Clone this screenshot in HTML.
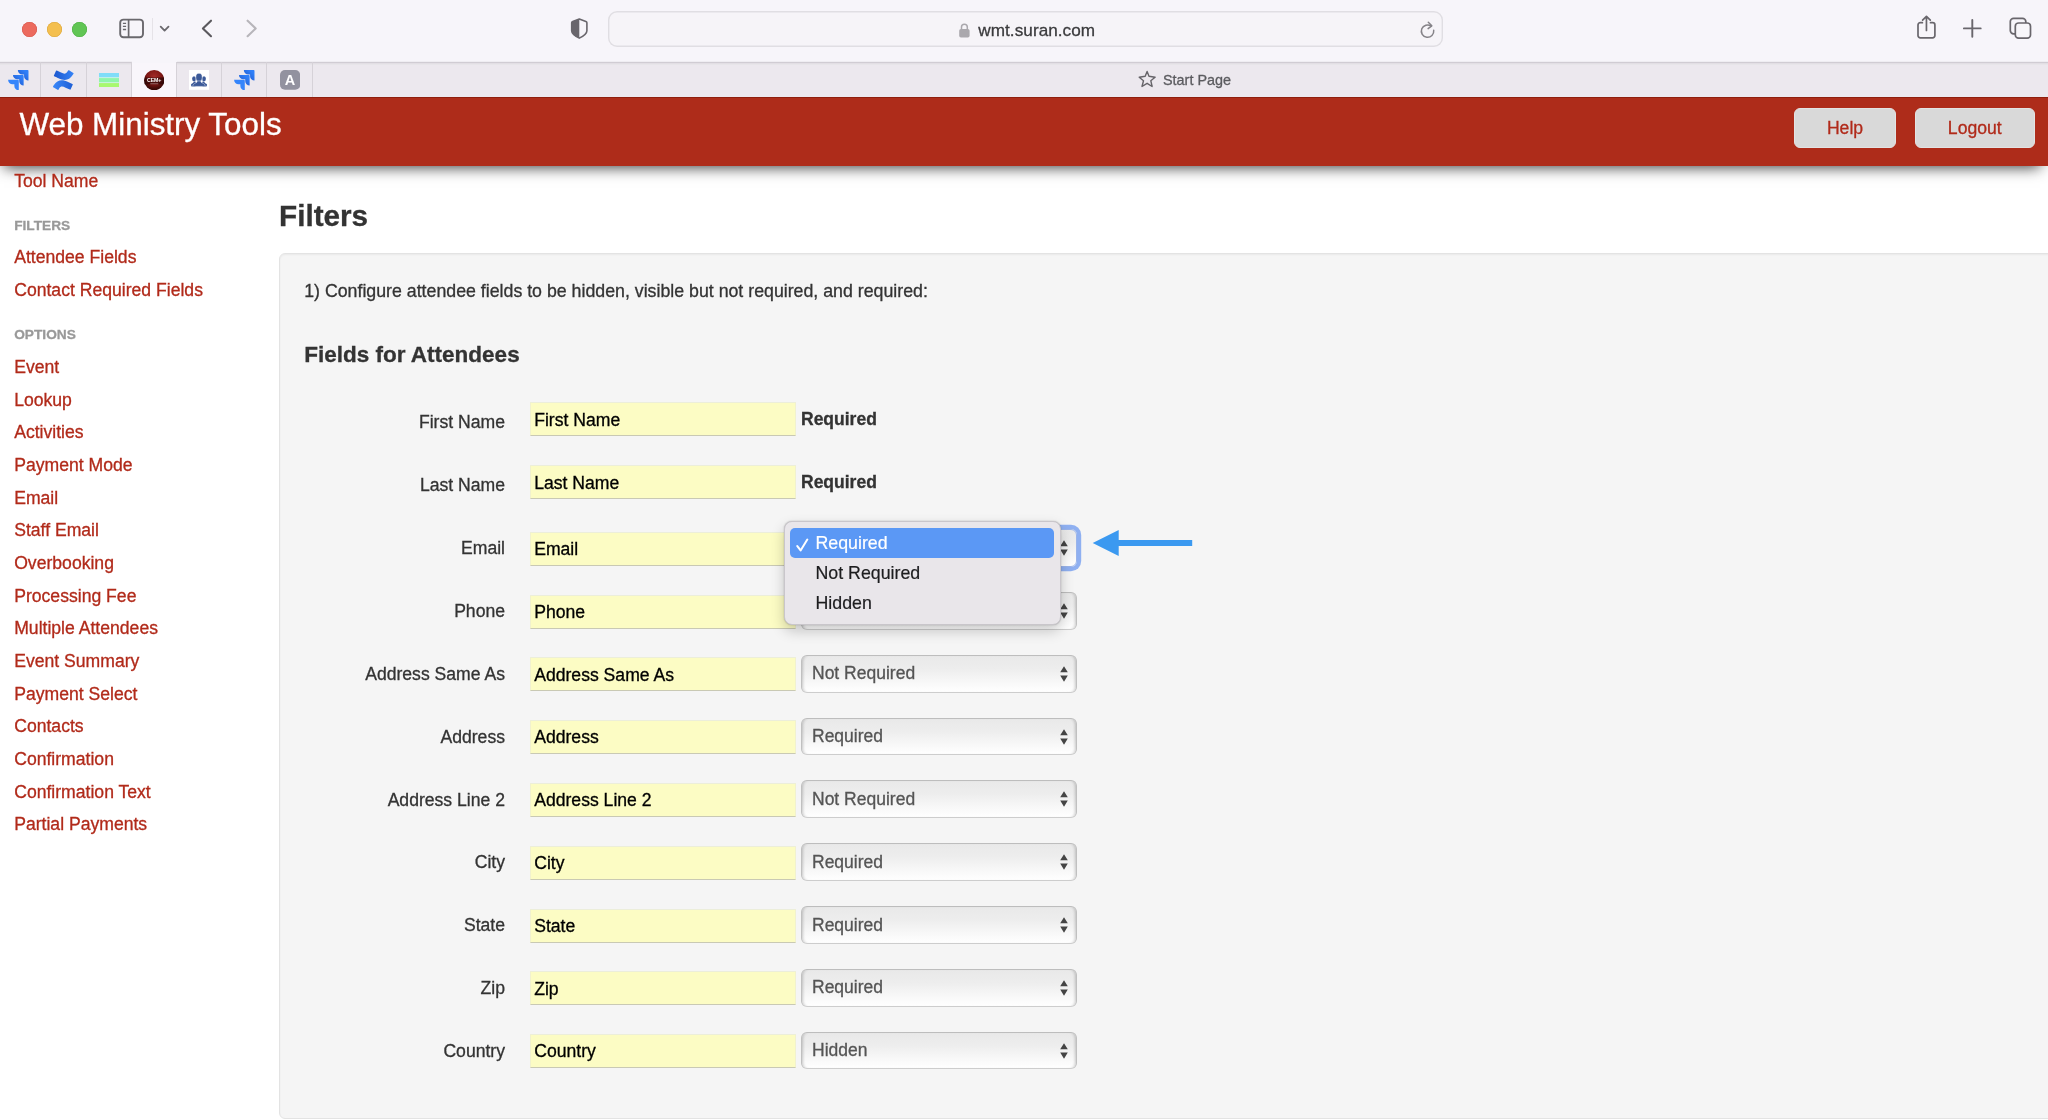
<!DOCTYPE html>
<html lang="en">
<head>
<meta charset="utf-8">
<title>Web Ministry Tools - Filters</title>
<style>
*{box-sizing:border-box;}
html,body{margin:0;padding:0;}
body{width:2048px;height:1120px;overflow:hidden;position:relative;background:#fff;
  font-family:"Liberation Sans",sans-serif;font-size:17.6px;color:#333;-webkit-text-stroke:.3px currentColor;}
#root{position:absolute;left:0;top:0;width:2048px;height:1120px;overflow:hidden;will-change:transform;}
a{text-decoration:none;color:#b12a1a;}
svg{display:block;}

/* ---------- Safari chrome ---------- */
#toolbar{z-index:5;position:absolute;left:0;top:0;width:2048px;height:61px;background:#f7f5fa;}
#toolbar .dot{position:absolute;top:21.6px;width:15.1px;height:15.1px;border-radius:50%;}
#toolbar .ico{position:absolute;}
#urlbar{position:absolute;left:608px;top:11.2px;width:835px;height:35.6px;border:none;box-shadow:inset 0 0 0 1.4px #e0dee3;border-radius:9px;background:#f6f4f8;}
#urlbar .url{position:absolute;left:370.3px;top:8px;font-size:17.15px;line-height:22px;color:#3b3b3d;letter-spacing:0.05px;}
#tabbar{z-index:4;position:absolute;left:0;top:61px;width:2048px;height:36px;background:linear-gradient(#efedf2 0,#efedf2 1px,#d0ccd3 1px,#d0ccd3 2px,#e2dee4 2px,#e2dee4 3px,#e7e5e9 3px,#e7e5e9 4px,#ece8ee 4px,#ece8ee 100%);}
#tabbar .tab{position:absolute;top:1px;height:35px;border-right:1px solid #d6d2d8;}
#tabbar .tab.active{background:linear-gradient(#f7f5fa 0,#f7f5fa 2px,#f9f6fb 2px,#f9f6fb 100%);top:0;height:36px;border-right:none;}
#tabbar .tico{position:absolute;}
#tabbar .title{position:absolute;left:1163px;top:9px;font-size:14.4px;line-height:20px;color:#5b5b5f;}

/* ---------- page ---------- */
#navbar{position:absolute;left:0;top:97px;width:2048px;height:69px;background:#ae2c1a;border-top:1px solid #8f1f0e;box-shadow:-2px 7px 14px -6px rgba(0,0,0,.8);}
#navbar .brand{position:absolute;left:19.4px;top:4.5px;font-size:31.4px;line-height:44px;color:#fff;white-space:nowrap;}
#navbar .btn{position:absolute;top:10.3px;height:40px;border:1px solid #e3e3e3;border-radius:6px;background:#d9d9d9;color:#b12a1a;font-size:17.6px;line-height:39px;text-align:center;}

#sidebar{position:absolute;left:0;top:166px;width:270px;}
#sidebar ul{list-style:none;margin:0;padding:0;}
#sidebar li{position:absolute;left:14.2px;white-space:nowrap;line-height:24px;}
#sidebar li.hdr{font-size:13.7px;font-weight:bold;color:#999;text-transform:uppercase;}

#content{position:absolute;left:279px;top:166px;width:1769px;}
#content h1{position:absolute;left:0;top:30px;margin:0;font-size:29.7px;line-height:40px;font-weight:bold;color:#333;}
.well{position:absolute;left:0;top:87px;width:1800px;height:865.5px;background:#f5f5f5;border:1.3px solid #e3e3e3;border-radius:6px;box-shadow:inset 0 1px 2px rgba(0,0,0,.05);}
.well p{position:absolute;left:24.2px;top:25px;font-size:17.75px;margin:0;line-height:24px;white-space:nowrap;}
.well h4{position:absolute;left:24.2px;top:86px;margin:0;font-size:22.5px;line-height:30px;font-weight:bold;}
.row{position:absolute;left:0;width:900px;height:40px;}
.row label{position:absolute;left:0;width:225px;top:0;text-align:right;line-height:24px;white-space:nowrap;}
.row .inp{position:absolute;left:250px;width:266px;height:34px;background:#fcfcc4;border-top:1.3px solid #eceeda;border-bottom:1.5px solid #c9c9b4;border-left:1px solid #f1f1cf;border-right:1px solid #f1f1cf;color:#000;line-height:24px;padding:4.4px 0 0 3.2px;white-space:nowrap;}
.row .req{position:absolute;left:521px;font-weight:bold;font-size:17.5px;line-height:24px;}
.row .sel{position:absolute;left:521px;width:276px;height:37.8px;border:1.3px solid #c0c0c0;border-top-color:#bdbdbd;border-bottom-color:#cdcdcd;border-radius:6px;
  background:linear-gradient(#e9e9e9 0%,#ededed 35%,#f7f7f7 70%,#fff 100%);
  box-shadow:inset 3px 0 3px -2px rgba(0,0,0,.2),inset -3px 0 3px -2px rgba(0,0,0,.2);
  color:#555;font-size:17.5px;line-height:24px;padding:5.7px 0 0 10px;white-space:nowrap;}
.row .sel svg{position:absolute;right:7.8px;top:10px;}
.row .sel.focus{box-shadow:0 0 0 4.2px #8fb0f1;border-color:#9ab4ea;}

#popup{position:absolute;left:784.3px;top:521px;width:277px;height:103.500px;border-radius:8px;background:#e9e6ea;border:1px solid #c9c6cb;box-shadow:0 6px 14px rgba(0,0,0,.2),0 0 1.5px rgba(0,0,0,.25);}
#popup .it{position:absolute;left:5px;width:264px;height:30px;border-radius:5px;font-size:17.8px;line-height:31px;padding-left:25.2px;-webkit-text-stroke:.2px currentColor;color:#1d1d1f;white-space:nowrap;}
#popup .it.sel{background:#5b98f5;color:#fff;}
#popup .it svg{position:absolute;left:6px;top:9.5px;}
#arrow{position:absolute;left:1092px;top:528px;}
</style>
</head>
<body>
<div id="root">

<div id="toolbar">
  <span class="dot" style="left:21.6px;background:#ec6a5e;box-shadow:inset 0 0 0 .6px #d8574c"></span>
  <span class="dot" style="left:46.6px;background:#f4bf4f;box-shadow:inset 0 0 0 .6px #dba63b"></span>
  <span class="dot" style="left:71.7px;background:#61c554;box-shadow:inset 0 0 0 .6px #4fb043"></span>
  <!-- sidebar icon -->
  <svg class="ico" style="left:118px;top:17px" width="28" height="23" viewBox="0 0 28 23">
    <rect x="2.2" y="2.6" width="22.8" height="17.6" rx="3.2" fill="none" stroke="#6a686d" stroke-width="1.9"/>
    <line x1="10.6" y1="2.6" x2="10.6" y2="20.2" stroke="#6a686d" stroke-width="1.7"/>
    <path d="M4.9 6.3h3.2M4.9 9.4h3.2M4.9 12.5h3.2" stroke="#6a686d" stroke-width="1.3"/>
  </svg>
  <span class="ico" style="left:152px;top:18px;width:1.2px;height:22px;background:#e6e3e8"></span>
  <svg class="ico" style="left:158px;top:23px" width="13" height="11" viewBox="0 0 13 11">
    <path d="M2.7 3.6l3.9 4 3.9-4" fill="none" stroke="#6a686d" stroke-width="1.8" stroke-linecap="round" stroke-linejoin="round"/>
  </svg>
  <svg class="ico" style="left:198px;top:17px" width="18" height="23" viewBox="0 0 18 23">
    <path d="M13 3.7L4.9 11.4 13 19.2" fill="none" stroke="#5b595e" stroke-width="2.1" stroke-linecap="round" stroke-linejoin="round"/>
  </svg>
  <svg class="ico" style="left:242px;top:17px" width="18" height="23" viewBox="0 0 18 23">
    <path d="M5.6 3.7l8.1 7.7-8.1 7.8" fill="none" stroke="#b7b5ba" stroke-width="2.1" stroke-linecap="round" stroke-linejoin="round"/>
  </svg>
  <!-- shield -->
  <svg class="ico" style="left:568px;top:16px" width="23" height="26" viewBox="0 0 23 26">
    <path d="M11.300 3L17.900 5.400Q18.900 5.750 18.900 6.800V14.700C18.900 17.800 16 19.800 11.300 22.100 6.600 19.800 3.700 17.800 3.700 14.700V6.800Q3.700 5.750 4.700 5.400Z" fill="none" stroke="#69666c" stroke-width="1.600" stroke-linejoin="round"/>
    <path d="M11.300 3L4.700 5.400Q3.700 5.750 3.700 6.800V14.700C3.700 17.800 6.600 19.800 11.300 22.100Z" fill="#69666c"/>
  </svg>
  <div id="urlbar">
    <svg class="ico" style="left:350px;top:11.2px" width="13" height="17" viewBox="0 0 13 17">
      <rect x="1.2" y="6.900" width="10.400" height="8.600" rx="1.800" fill="#aaa8ad"/>
      <path d="M3.5 7.400V5.100a2.900 2.900 0 0 1 5.800 0v2.300" fill="none" stroke="#aaa8ad" stroke-width="1.500"/>
    </svg>
    <span class="url">wmt.suran.com</span>
    <svg class="ico" style="left:809.6px;top:9.4px" width="20" height="20" viewBox="0 0 20 20">
      <path d="M15.700 9.300a6.200 6.200 0 1 1-2.500-4.200" fill="none" stroke="#858388" stroke-width="1.500" stroke-linecap="round"/>
      <path d="M10.300 1.300l3.500 3.500-3.700 2.800" fill="none" stroke="#858388" stroke-width="1.500" stroke-linecap="round" stroke-linejoin="round"/>
    </svg>
  </div>
  <!-- share -->
  <svg class="ico" style="left:1912px;top:12px" width="30" height="30" viewBox="0 0 30 30">
    <path d="M10.400 10.700H8.300a2.300 2.300 0 0 0-2.300 2.300v10.500a2.300 2.300 0 0 0 2.300 2.300h12.300a2.300 2.300 0 0 0 2.300-2.300V13a2.300 2.300 0 0 0-2.300-2.300h-2.100" fill="none" stroke="#69666c" stroke-width="1.700" stroke-linecap="round"/>
    <path d="M14.450 18.500V4.700M10.600 8.200l3.850-3.800 3.850 3.800" fill="none" stroke="#69666c" stroke-width="1.700" stroke-linecap="round" stroke-linejoin="round"/>
  </svg>
  <svg class="ico" style="left:1960px;top:16px" width="24" height="24" viewBox="0 0 24 24">
    <path d="M12.300 4v16.800M3.900 12.400h16.800" fill="none" stroke="#69666c" stroke-width="1.900" stroke-linecap="round"/>
  </svg>
  <svg class="ico" style="left:2006px;top:14px" width="28" height="28" viewBox="0 0 28 28">
    <rect x="4.300" y="4.300" width="15.500" height="15.500" rx="3.300" fill="none" stroke="#69666c" stroke-width="1.700"/>
    <rect x="9.300" y="9.000" width="15.200" height="15.200" rx="3.300" fill="#f8f6fa" stroke="#69666c" stroke-width="1.700"/>
  </svg>
</div>

<div id="tabbar">
  <div class="tab" style="left:0;width:41.200px"></div>
  <div class="tab" style="left:41.200px;width:45.400px"></div>
  <div class="tab" style="left:86.600px;width:45.400px"></div>
  <div class="tab active" style="left:132px;width:44.800px"></div>
  <div class="tab" style="left:176px;width:46px;border-left:1px solid #d6d2d8"></div>
  <div class="tab" style="left:222px;width:45.300px"></div>
  <div class="tab" style="left:267.300px;width:45.300px"></div>
  <svg class="tico" style="left:8.1px;top:8.800px" width="20.600" height="20.400" viewBox="0 0 24 24">
    <defs><linearGradient id="jg1" x1=".9" y1=".1" x2=".35" y2=".65"><stop offset=".2" stop-color="#2f7ff8"/><stop offset="1" stop-color="#2566dc"/></linearGradient></defs>
    <path d="M23.013 0H11.455a5.215 5.215 0 0 0 5.215 5.215h2.129v2.057A5.215 5.215 0 0 0 24 12.483V1.005A1.001 1.001 0 0 0 23.013 0Z" fill="url(#jg1)"/>
    <path d="M17.294 5.757H5.736a5.215 5.215 0 0 0 5.215 5.214h2.129v2.058a5.218 5.218 0 0 0 5.215 5.214V6.758a1.001 1.001 0 0 0-1.001-1.001z" fill="url(#jg1)"/>
    <path d="M11.571 11.513H0a5.218 5.218 0 0 0 5.232 5.215h2.130v2.057A5.215 5.215 0 0 0 12.575 24V12.518a1.005 1.005 0 0 0-1.005-1.005z" fill="#3585fb"/>
  </svg>
  <svg class="tico" style="left:53.400px;top:8.700px" width="20.600" height="20.200" viewBox="0 0 24 24" preserveAspectRatio="none">
    <defs><linearGradient id="cg1" x1="0" y1="0" x2="1" y2="0"><stop offset="0" stop-color="#1c58cf"/><stop offset="1" stop-color="#3583f6"/></linearGradient>
    <linearGradient id="cg2" x1="0" y1="0" x2="1" y2="0"><stop offset="0" stop-color="#3a88f9"/><stop offset="1" stop-color="#1f5fd5"/></linearGradient></defs>
    <path d="M23.131 5.743c.249-.405.531-.875.764-1.250a.764.764 0 0 0-.256-1.034L18.675.404a.764.764 0 0 0-1.058.260c-.195.335-.451.763-.734 1.225-1.966 3.246-3.945 2.850-7.508 1.146L4.437.694a.764.764 0 0 0-1.027.382L1.046 6.422a.764.764 0 0 0 .382 1c1.039.490 3.105 1.467 4.965 2.361 6.698 3.246 12.392 3.029 16.738-4.040z" fill="url(#cg1)"/>
    <path d="M.87 18.257c-.248.382-.53.875-.763 1.245a.764.764 0 0 0 .255 1.040l4.965 3.054a.764.764 0 0 0 1.058-.260c.199-.332.454-.763.733-1.221 1.967-3.247 3.945-2.853 7.508-1.146l4.957 2.337a.764.764 0 0 0 1.028-.382l2.364-5.346a.764.764 0 0 0-.382-1 599.851 599.851 0 0 1-4.965-2.361C10.911 10.970 5.224 11.185.870 18.257z" fill="url(#cg2)"/>
  </svg>
  <svg class="tico" style="left:98.700px;top:11.800px" width="20.200" height="14.400" viewBox="0 0 20.200 14.400">
    <rect x="0" y="0" width="20.200" height="14.400" fill="#d3f3e6"/>
    <rect x="0" y="0" width="20.200" height="4.200" fill="#80ddf9"/>
    <rect x="0" y="5.100" width="20.200" height="4.100" fill="#8ff5ab"/>
    <rect x="0" y="10.100" width="20.200" height="4.300" fill="#a8f86e"/>
  </svg>
  <svg class="tico" style="left:143.900px;top:8.7px" width="20.400" height="20.400" viewBox="0 0 20.400 20.400">
    <defs><radialGradient id="rg" cx=".5" cy=".32" r=".62"><stop offset="0" stop-color="#a32a28"/><stop offset=".6" stop-color="#7d1715"/><stop offset="1" stop-color="#3a0907"/></radialGradient></defs>
    <circle cx="10.200" cy="10.200" r="10.100" fill="url(#rg)"/>
    <path d="M.6 7.600h19.200a10.100 10.100 0 0 1 0 6.600H.6a10.100 10.100 0 0 1 0-6.600z" fill="#1c0303" opacity=".55"/>
    <text x="10.200" y="12.100" font-family="Liberation Sans, sans-serif" font-size="5.300" font-weight="bold" fill="#fff" text-anchor="middle" letter-spacing="-.15">CEM+</text>
    <rect x="6.300" y="13.400" width="8" height=".8" fill="#d9b0ae" opacity=".7"/>
  </svg>
  <svg class="tico" style="left:189.100px;top:9.0px" width="20" height="19.800" viewBox="0 0 20 19.800">
    <rect width="20" height="19.800" fill="#fff"/>
    <g fill="#3b5998">
      <ellipse cx="5" cy="8.700" rx="1.900" ry="2.500"/>
      <path d="M1.900 14.800c.3-.8 1.100-1.400 2.100-1.900.5-.2.700-.7.700-1.300h1.700l1.200 3.500-1.400 1.400H2.500z"/>
      <ellipse cx="15" cy="8.700" rx="1.900" ry="2.500"/>
      <path d="M18.100 14.800c-.3-.8-1.100-1.400-2.100-1.900-.5-.2-.7-.7-.7-1.300h-1.700l-1.200 3.500 1.400 1.400h3.700z"/>
      <ellipse cx="10" cy="7.400" rx="3.200" ry="4.100" stroke="#fff" stroke-width=".5"/>
      <path d="M3.700 16.400c.2-1.800 1.200-2.700 2.800-3.300 1.200-.5 1.600-1 1.700-2.100h3.600c.1 1.100.5 1.600 1.700 2.100 1.600.6 2.600 1.500 2.800 3.300z" stroke="#fff" stroke-width=".4"/>
    </g>
  </svg>
  <svg class="tico" style="left:234.2px;top:8.800px" width="20.600" height="20.400" viewBox="0 0 24 24">
    <defs><linearGradient id="jg2" x1=".9" y1=".1" x2=".35" y2=".65"><stop offset=".2" stop-color="#2f7ff8"/><stop offset="1" stop-color="#2566dc"/></linearGradient></defs>
    <path d="M23.013 0H11.455a5.215 5.215 0 0 0 5.215 5.215h2.129v2.057A5.215 5.215 0 0 0 24 12.483V1.005A1.001 1.001 0 0 0 23.013 0Z" fill="url(#jg2)"/>
    <path d="M17.294 5.757H5.736a5.215 5.215 0 0 0 5.215 5.214h2.129v2.058a5.218 5.218 0 0 0 5.215 5.214V6.758a1.001 1.001 0 0 0-1.001-1.001z" fill="url(#jg2)"/>
    <path d="M11.571 11.513H0a5.218 5.218 0 0 0 5.232 5.215h2.130v2.057A5.215 5.215 0 0 0 12.575 24V12.518a1.005 1.005 0 0 0-1.005-1.005z" fill="#3585fb"/>
  </svg>
  <svg class="tico" style="left:279.500px;top:9.0px" width="20.200" height="19.800" viewBox="0 0 20.200 19.800">
    <rect width="20.200" height="19.800" rx="5" fill="#92929f"/>
    <text x="10.100" y="15.200" font-family="Liberation Sans, sans-serif" font-size="14.500" font-weight="bold" fill="#fff" text-anchor="middle">A</text>
  </svg>
  <svg class="tico" style="left:1136px;top:7px" width="23" height="22" viewBox="0 0 23 22">
    <path d="M11.100 3.500L13 8.300 19.100 9.300 14.800 12.700 16.100 18.500 11.100 15.300 6 18.500 7.500 12.700 3.200 9.300 9.200 8.300Z" fill="none" stroke="#666469" stroke-width="1.400" stroke-linejoin="round"/>
  </svg>
  <span class="title">Start Page</span>
</div>

<div id="navbar">
  <a class="brand">Web Ministry Tools</a>
  <a class="btn" style="left:1794px;width:102px">Help</a>
  <a class="btn" style="left:1914.500px;width:120.500px">Logout</a>
</div>

<div id="sidebar"><ul>
  <li style="top:2.9px"><a>Tool Name</a></li>
  <li class="hdr" style="top:47.5px">Filters</li>
  <li style="top:79.2px"><a>Attendee Fields</a></li>
  <li style="top:111.9px"><a>Contact Required Fields</a></li>
  <li class="hdr" style="top:156.5px">Options</li>
  <li style="top:188.9px"><a>Event</a></li>
  <li style="top:221.6px"><a>Lookup</a></li>
  <li style="top:254.3px"><a>Activities</a></li>
  <li style="top:286.9px"><a>Payment Mode</a></li>
  <li style="top:319.6px"><a>Email</a></li>
  <li style="top:352.3px"><a>Staff Email</a></li>
  <li style="top:385.0px"><a>Overbooking</a></li>
  <li style="top:417.7px"><a>Processing Fee</a></li>
  <li style="top:450.3px"><a>Multiple Attendees</a></li>
  <li style="top:483.0px"><a>Event Summary</a></li>
  <li style="top:515.7px"><a>Payment Select</a></li>
  <li style="top:548.4px"><a>Contacts</a></li>
  <li style="top:581.1px"><a>Confirmation</a></li>
  <li style="top:613.7px"><a>Confirmation Text</a></li>
  <li style="top:646.4px"><a>Partial Payments</a></li>
</ul></div>
<div id="content">
<h1>Filters</h1>
<div class="well">
<p>1) Configure attendee fields to be hidden, visible but not required, and required:</p>
<h4>Fields for Attendees</h4>
<div class="row" style="top:148.2px"><label style="top:8.3px">First Name</label><div class="inp">First Name</div><span class="req" style="top:5.2px">Required</span></div>
<div class="row" style="top:211.2px"><label style="top:8.2px">Last Name</label><div class="inp">Last Name</div><span class="req" style="top:5.2px">Required</span></div>
<div class="row" style="top:277.7px"><label style="top:4.5px">Email</label><div class="inp">Email</div><div class="sel focus" style="top:-2.6px">Required<svg width="8" height="16" viewBox="0 0 8 16"><path d="M4 .2L7.800 6.200H.2zM4 15.800L.2 9.600h7.600z" fill="#444"/></svg></div></div>
<div class="row" style="top:340.5px"><label style="top:4.6px">Phone</label><div class="inp">Phone</div><div class="sel" style="top:-2.6px">Required<svg width="8" height="16" viewBox="0 0 8 16"><path d="M4 .2L7.800 6.200H.2zM4 15.800L.2 9.600h7.600z" fill="#444"/></svg></div></div>
<div class="row" style="top:403.3px"><label style="top:4.6px">Address Same As</label><div class="inp">Address Same As</div><div class="sel" style="top:-2.6px">Not Required<svg width="8" height="16" viewBox="0 0 8 16"><path d="M4 .2L7.800 6.200H.2zM4 15.800L.2 9.600h7.600z" fill="#444"/></svg></div></div>
<div class="row" style="top:466.1px"><label style="top:4.7px">Address</label><div class="inp">Address</div><div class="sel" style="top:-2.6px">Required<svg width="8" height="16" viewBox="0 0 8 16"><path d="M4 .2L7.800 6.200H.2zM4 15.800L.2 9.600h7.600z" fill="#444"/></svg></div></div>
<div class="row" style="top:528.9px"><label style="top:4.7px">Address Line 2</label><div class="inp">Address Line 2</div><div class="sel" style="top:-2.6px">Not Required<svg width="8" height="16" viewBox="0 0 8 16"><path d="M4 .2L7.800 6.200H.2zM4 15.800L.2 9.600h7.600z" fill="#444"/></svg></div></div>
<div class="row" style="top:591.7px"><label style="top:4.8px">City</label><div class="inp">City</div><div class="sel" style="top:-2.6px">Required<svg width="8" height="16" viewBox="0 0 8 16"><path d="M4 .2L7.800 6.200H.2zM4 15.800L.2 9.600h7.600z" fill="#444"/></svg></div></div>
<div class="row" style="top:654.5px"><label style="top:4.8px">State</label><div class="inp">State</div><div class="sel" style="top:-2.6px">Required<svg width="8" height="16" viewBox="0 0 8 16"><path d="M4 .2L7.800 6.200H.2zM4 15.800L.2 9.600h7.600z" fill="#444"/></svg></div></div>
<div class="row" style="top:717.3px"><label style="top:4.9px">Zip</label><div class="inp">Zip</div><div class="sel" style="top:-2.6px">Required<svg width="8" height="16" viewBox="0 0 8 16"><path d="M4 .2L7.800 6.200H.2zM4 15.800L.2 9.600h7.600z" fill="#444"/></svg></div></div>
<div class="row" style="top:780.1px"><label style="top:4.9px">Country</label><div class="inp">Country</div><div class="sel" style="top:-2.6px">Hidden<svg width="8" height="16" viewBox="0 0 8 16"><path d="M4 .2L7.800 6.200H.2zM4 15.800L.2 9.600h7.600z" fill="#444"/></svg></div></div>
</div>
</div>
<div id="popup">
  <div class="it sel" style="top:6px"><svg width="13" height="14" viewBox="0 0 13 14"><path d="M1.300 8.100l3.300 4.300L11.300 1.500" fill="none" stroke="#fff" stroke-width="2" stroke-linecap="round" stroke-linejoin="round"/></svg>Required</div>
  <div class="it" style="top:36px">Not Required</div>
  <div class="it" style="top:66px">Hidden</div>
</div>
<svg id="arrow" width="102" height="30" viewBox="0 0 102 30"><path d="M.7 15L26.700 2v10h73.500v6H26.700v10z" fill="#3b99f0"/></svg>
</div>
</body>
</html>
